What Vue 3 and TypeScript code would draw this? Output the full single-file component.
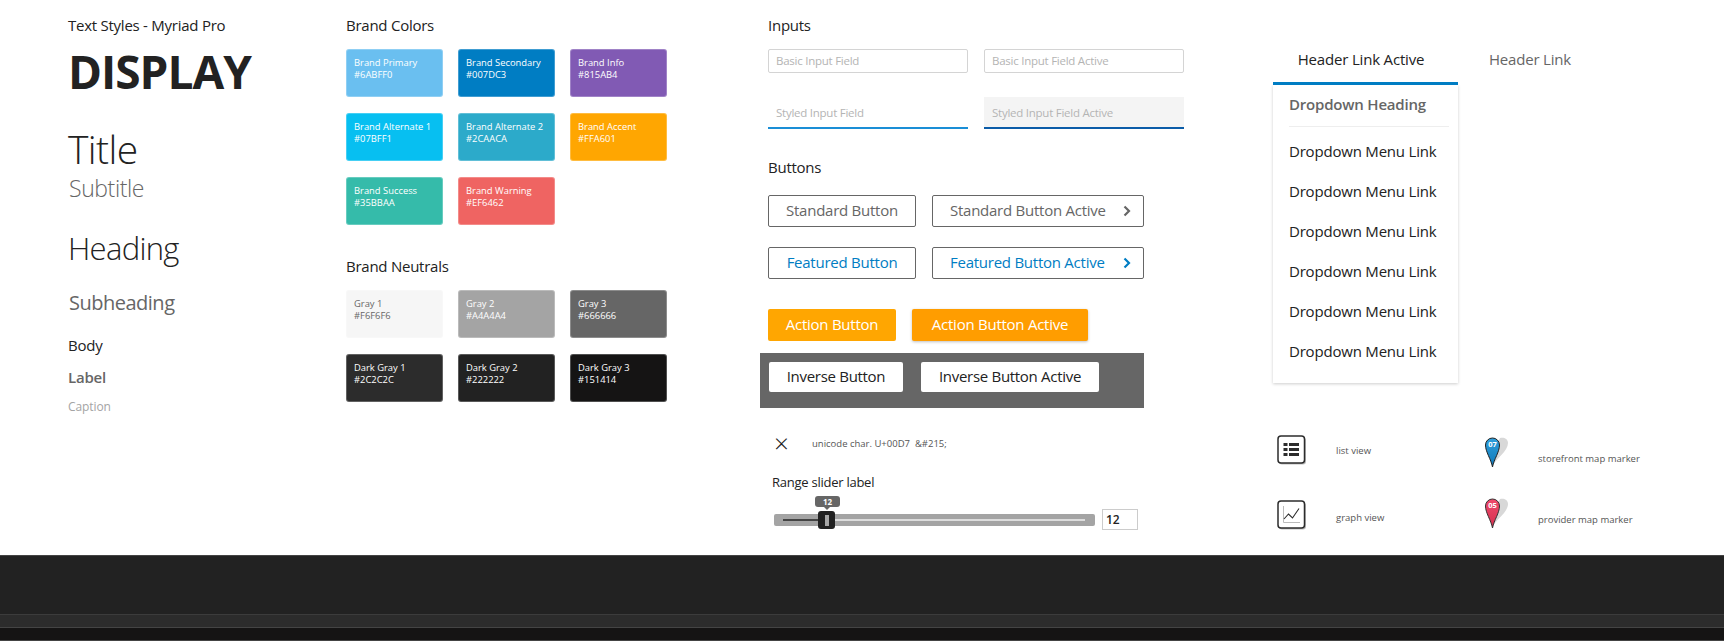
<script setup lang="ts">
const brand = [
  { name: 'Brand Primary', hex: '#6ABFF0' },
  { name: 'Brand Secondary', hex: '#007DC3' },
  { name: 'Brand Info', hex: '#815AB4' },
  { name: 'Brand Alternate 1', hex: '#07BFF1' },
  { name: 'Brand Alternate 2', hex: '#2CAACA' },
  { name: 'Brand Accent', hex: '#FFA601' },
  { name: 'Brand Success', hex: '#35BBAA' },
  { name: 'Brand Warning', hex: '#EF6462' },
]
const neutrals = [
  { name: 'Gray 1', hex: '#F6F6F6', fg: '#666666' },
  { name: 'Gray 2', hex: '#A4A4A4' },
  { name: 'Gray 3', hex: '#666666' },
  { name: 'Dark Gray 1', hex: '#2C2C2C' },
  { name: 'Dark Gray 2', hex: '#222222' },
  { name: 'Dark Gray 3', hex: '#151414' },
]
const links = Array.from({ length: 6 }, () => 'Dropdown Menu Link')
</script>

<template>
  <div class="page">
    <main class="main">
      <section class="col col-text">
        <h2 class="head">Text Styles - Myriad Pro</h2>
        <div class="t-display">DISPLAY</div>
        <div class="t-title">Title</div>
        <div class="t-subtitle">Subtitle</div>
        <div class="t-heading">Heading</div>
        <div class="t-subheading">Subheading</div>
        <div class="t-body">Body</div>
        <div class="t-label">Label</div>
        <div class="t-caption">Caption</div>
      </section>

      <section class="col col-colors">
        <h2 class="head">Brand Colors</h2>
        <div class="swatches first">
          <div v-for="s in brand" :key="s.hex" class="swatch" :style="{ background: s.hex }">
            <span>{{ s.name }}</span><span>{{ s.hex }}</span>
          </div>
        </div>
        <h2 class="head neutrals-head">Brand Neutrals</h2>
        <div class="swatches">
          <div v-for="s in neutrals" :key="s.hex" class="swatch" :style="{ background: s.hex, color: s.fg }">
            <span>{{ s.name }}</span><span>{{ s.hex }}</span>
          </div>
        </div>
      </section>

      <section class="col col-forms">
        <h2 class="head">Inputs</h2>
        <div class="inputs">
          <div class="field basic">Basic Input Field</div>
          <div class="field basic">Basic Input Field Active</div>
          <div class="field styled">Styled Input Field</div>
          <div class="field styled active">Styled Input Field Active</div>
        </div>
        <h2 class="head buttons-head">Buttons</h2>
        <div class="btn-row r-std">
          <button class="btn std w-std">Standard Button</button>
          <button class="btn std w-std-a">
            <span class="label-a">Standard Button Active</span>
            <svg class="chev" width="8" height="12" viewBox="0 0 8 12"><path d="M1.500 1.500 6 6l-4.500 4.500" fill="none" stroke="currentColor" stroke-width="2.200"/></svg>
          </button>
        </div>
        <div class="btn-row r-feat">
          <button class="btn feat w-std">Featured Button</button>
          <button class="btn feat w-std-a">
            <span class="label-a">Featured Button Active</span>
            <svg class="chev" width="8" height="12" viewBox="0 0 8 12"><path d="M1.500 1.500 6 6l-4.500 4.500" fill="none" stroke="currentColor" stroke-width="2.200"/></svg>
          </button>
        </div>
        <div class="btn-row r-action">
          <button class="btn action w-action">Action Button</button>
          <button class="btn action hot w-action-a">Action Button Active</button>
        </div>
        <div class="inverse-panel">
          <button class="btn inverse w-inv">Inverse Button</button>
          <button class="btn inverse w-inv-a">Inverse Button Active</button>
        </div>
        <div class="times-row">
          <span class="times">×</span>
          <span class="times-note">unicode char. U+00D7 &nbsp;&amp;#215;</span>
        </div>
        <div class="range-label">Range slider label</div>
        <div class="range-row">
          <div class="track">
            <div class="rail"><div class="rail-done"></div></div>
            <div class="bubble">12</div>
            <div class="thumb"><i></i></div>
          </div>
          <div class="range-value">12</div>
        </div>
      </section>

      <section class="col col-nav">
        <nav class="tabs">
          <a class="tab active">Header Link Active</a>
          <a class="tab">Header Link</a>
        </nav>
        <div class="dropdown">
          <div class="dd-head">Dropdown Heading</div>
          <a v-for="(l, i) in links" :key="i" class="dd-link">{{ l }}</a>
        </div>
        <div class="legend">
          <div class="legend-col left">
            <div class="legend-item">
              <svg class="ico" width="30" height="30" viewBox="0 0 30 30">
                <rect x="2" y="2.500" width="27" height="27" rx="3" fill="#bbb"/>
                <rect x="1" y="1" width="26.500" height="27" rx="3" fill="#fff" stroke="#2c2c2c" stroke-width="1.500"/>
                <path d="M6.500 8h4v3h-4zM12 8h10v3H12zM6.500 13h4v3h-4zM12 13h10v3H12zM6.500 18h4v3h-4zM12 18h10v3H12z" fill="#2c2c2c"/>
              </svg>
              <span class="legend-text">list view</span>
            </div>
            <div class="legend-item second">
              <svg class="ico" width="30" height="30" viewBox="0 0 30 30">
                <rect x="2" y="2.500" width="27" height="27" rx="3" fill="#bbb"/>
                <rect x="1" y="1" width="26.500" height="27" rx="3" fill="#fff" stroke="#2c2c2c" stroke-width="1.500"/>
                <path d="M6.500 6v16.500H23" fill="none" stroke="#bbb" stroke-width="1"/>
                <path d="M7 19l4.500-5 4 4L22 8.500" fill="none" stroke="#2c2c2c" stroke-width="1.100"/>
              </svg>
              <span class="legend-text lower">graph view</span>
            </div>
          </div>
          <div class="legend-col right">
            <div class="legend-item marker-item">
              <svg class="ico" width="26" height="32" viewBox="0 0 26 32">
                <defs>
                  <linearGradient id="blue" x1="0" x2="0" y1="0" y2="1"><stop offset="0" stop-color="#2f9fdc"/><stop offset="1" stop-color="#0f78b8"/></linearGradient>
                </defs>
                <path d="M9 28 C12 22 24 14 24 6 C24 1 19 0 16 1 L9 14Z" fill="#d8d8d8"/>
                <path d="M8.500 30 C7 22 1.500 15 1.500 8 A7 7 0 0 1 15.500 8 C15.500 15 10 22 8.500 30Z" fill="url(#blue)" stroke="#222" stroke-width="1"/>
                <text x="8.500" y="10" class="pin-num">07</text>
              </svg>
              <span class="legend-text marker-text">storefront map marker</span>
            </div>
            <div class="legend-item marker-item second-m">
              <svg class="ico" width="26" height="32" viewBox="0 0 26 32">
                <defs>
                  <linearGradient id="red" x1="0" x2="0" y1="0" y2="1"><stop offset="0" stop-color="#ef4a6b"/><stop offset="1" stop-color="#d42f4e"/></linearGradient>
                </defs>
                <path d="M9 28 C12 22 24 14 24 6 C24 1 19 0 16 1 L9 14Z" fill="#d8d8d8"/>
                <path d="M8.500 30 C7 22 1.500 15 1.500 8 A7 7 0 0 1 15.500 8 C15.500 15 10 22 8.500 30Z" fill="url(#red)" stroke="#333" stroke-width="1"/>
                <text x="8.500" y="10" class="pin-num">05</text>
              </svg>
              <span class="legend-text marker-text">provider map marker</span>
            </div>
          </div>
        </div>
      </section>
    </main>

    <footer class="footer">
      <div class="f-a"></div>
      <div class="f-b"></div>
      <div class="f-c"></div>
    </footer>
  </div>
</template>

<style>
html, body { background: #fff; }
</style>

<style scoped>
.page {
  width: 1724px;
  height: 641px;
  overflow: hidden;
  font-family: "Open Sans", "Liberation Sans", sans-serif;
  color: #222;
}
.main {
  height: 555px;
  display: flex;
  padding-left: 68px;
  box-sizing: border-box;
}
.col { padding-top: 15px; box-sizing: border-box; }
.col-text { width: 278px; }
.col-colors { width: 422px; }
.col-forms { width: 505px; }
.col-nav { width: 451px; padding-top: 0; }

.head {
  margin: 0;
  font-size: 15px;
  line-height: 20px;
  font-weight: 400;
  letter-spacing: -0.25px;
  color: #222;
}

/* type specimens */
.t-display { margin-top: 4px; height: 64px; line-height: 64px; font-size: 46px; font-weight: 700; letter-spacing: -1px; }
.t-title { margin-top: 26px; height: 40px; line-height: 40px; font-size: 39px; font-weight: 300; letter-spacing: -0.6px; }
.t-subtitle { margin: 4px 0 0 1px; height: 30px; line-height: 30px; font-size: 23px; font-weight: 300; color: #666; letter-spacing: -0.4px; }
.t-heading { margin-top: 25px; height: 40px; line-height: 40px; font-size: 31px; font-weight: 300; letter-spacing: -0.7px; }
.t-subheading { margin: 20px 0 0 1px; height: 30px; line-height: 30px; font-size: 20px; color: #666; letter-spacing: -0.5px; }
.t-body { margin-top: 15px; height: 24px; line-height: 24px; font-size: 15px; letter-spacing: -0.2px; }
.t-label { margin-top: 8px; height: 24px; line-height: 24px; font-size: 15px; font-weight: 600; color: #666; letter-spacing: -0.2px; }
.t-caption { margin-top: 8px; height: 20px; line-height: 20px; font-size: 12px; color: #a4a4a4; letter-spacing: -0.1px; }

/* swatches */
.swatches {
  margin-top: 14px;
  display: grid;
  grid-template-columns: repeat(3, 97px);
  grid-auto-rows: 48px;
  column-gap: 15px;
  row-gap: 16px;
}
.swatch {
  display: flex;
  flex-direction: column;
  padding: 7px 7px;
  box-sizing: border-box;
  border: 1px solid rgba(255, 255, 255, 0.25);
  border-radius: 3px;
  color: #fff;
  font-size: 9.400px;
  font-weight: 500;
  line-height: 12px;
  white-space: nowrap;
}
.neutrals-head { margin-top: 31px; }

/* inputs */
.inputs {
  margin-top: 14px;
  display: grid;
  grid-template-columns: 200px 200px;
  column-gap: 16px;
  row-gap: 24px;
}
.field {
  box-sizing: border-box;
  font-size: 11.500px;
  letter-spacing: -0.25px;
  color: #b4b4b4;
  padding-left: 7px;
}
.basic {
  height: 24px;
  line-height: 22px;
  border: 1px solid #d4d4d4;
  border-radius: 2px;
}
.styled {
  height: 32px;
  line-height: 32px;
  padding-left: 8px;
  border-bottom: 2px solid #1a8ed6;
}
.styled.active {
  background: #f4f4f4;
  border-bottom-color: #0b5ca8;
}
.buttons-head { margin-top: 28px; }

/* buttons */
.btn-row { display: flex; }
.r-std { margin-top: 18px; gap: 16px; }
.r-feat { margin-top: 20px; gap: 16px; }
.r-action { margin-top: 30px; gap: 16px; }
.btn {
  box-sizing: border-box;
  height: 32px;
  padding: 0 0 2px;
  font-family: inherit;
  font-size: 15px;
  letter-spacing: -0.25px;
  background: #fff;
  border-radius: 2px;
  display: flex;
  align-items: center;
  justify-content: center;
}
.std { border: 1px solid #666; color: #666; }
.feat { border: 1px solid #666; color: #007dc3; }
.w-std { width: 148px; }
.w-std-a { width: 212px; justify-content: flex-start; padding-left: 17px; }
.label-a { flex: 0 0 auto; width: 165px; text-align: left; }
.chev { margin: 2px 0 0 8px; }
.action { border: 0; background: #ffa601; color: #fff; border-radius: 2px; }
.hot { background: #ff9d00; box-shadow: 0 1px 3px rgba(0, 0, 0, 0.25); }
.w-action { width: 128px; }
.w-action-a { width: 176px; }
.inverse-panel {
  margin: 12px 0 0 -8px;
  width: 384px;
  height: 55px;
  background: #666;
  box-sizing: border-box;
  padding: 9px 0 0 9px;
  display: flex;
  gap: 18px;
}
.inverse { height: 30px; border: 0; color: #222; letter-spacing: -0.3px; }
.w-inv { width: 134px; }
.w-inv-a { width: 178px; }

/* misc */
.times-row { margin-top: 23px; height: 24px; display: flex; align-items: center; }
.times { width: 44px; font-size: 26px; line-height: 24px; font-weight: 300; color: #222; padding-left: 6px; box-sizing: border-box; }
.times-note { font-size: 9.500px; color: #555; letter-spacing: 0; }
.range-label { margin: 17px 0 0 4px; height: 20px; line-height: 20px; font-size: 13px; letter-spacing: -0.25px; color: #222; }
.range-row {
  margin: 4px 0 0 6px;
  height: 35px;
  display: flex;
  align-items: flex-start;
}
.track {
  position: relative;
  margin-top: 18px;
  width: 321px;
  height: 12px;
  background: #a4a4a4;
  border-radius: 2px;
}
.rail {
  position: absolute;
  left: 9px;
  right: 10px;
  top: 5px;
  height: 2px;
  background: #ddd;
}
.rail-done { width: 44px; height: 2px; background: #444; }
.thumb {
  position: absolute;
  left: 44px;
  top: -3px;
  width: 17px;
  height: 18px;
  background: #222;
  border-radius: 3px;
  display: flex;
  align-items: center;
  justify-content: center;
}
.thumb i { display: block; width: 4px; height: 11px; background: #a8a8a8; }
.bubble {
  position: absolute;
  left: 41px;
  top: -18px;
  width: 25px;
  height: 11px;
  background: #666;
  border-radius: 3px;
  color: #fff;
  font-size: 8px;
  font-weight: 700;
  line-height: 11px;
  text-align: center;
}
.bubble::after {
  content: "";
  position: absolute;
  left: 9px;
  top: 11px;
  border: 3px solid transparent;
  border-bottom: 0;
  border-top-color: #666;
}
.range-value {
  margin: 13px 0 0 7px;
  width: 36px;
  height: 21px;
  box-sizing: border-box;
  border: 1px solid #ccc;
  font-size: 12px;
  font-weight: 600;
  line-height: 19px;
  padding-left: 3px;
}

/* nav */
.tabs { display: flex; height: 85px; padding-top: 36px; box-sizing: border-box; }
.tab {
  box-sizing: border-box;
  height: 49px;
  line-height: 46px;
  text-align: center;
  width: 144px;
  font-size: 15px;
  letter-spacing: -0.18px;
  color: #666;
}
.tab.active {
  width: 185px;
  padding-right: 9px;
  color: #222;
  border-bottom: 3px solid #007dc3;
}
.dropdown {
  width: 185px;
  height: 298px;
  box-sizing: border-box;
  padding-left: 16px;
  box-shadow: 0 1px 3px rgba(0, 0, 0, 0.2);
}
.dd-head {
  height: 42px;
  line-height: 38px;
  margin-right: 9px;
  margin-bottom: 4px;
  border-bottom: 1px solid #eee;
  box-sizing: border-box;
  font-size: 15px;
  font-weight: 600;
  letter-spacing: -0.2px;
  color: #666;
}
.dd-link {
  display: block;
  height: 40px;
  line-height: 40px;
  font-size: 15px;
  letter-spacing: -0.2px;
  color: #222;
}

/* legend */
.legend { display: flex; margin: 52px 0 0 4px; }
.legend-col { display: flex; flex-direction: column; }
.legend-col.left { width: 207px; }
.legend-item { display: flex; height: 30px; }
.legend-item .ico { flex: none; display: block; }
.legend-item.second { margin-top: 35px; }
.left .ico { margin-right: 29px; }
.legend-text {
  font-size: 9.500px;
  font-weight: 500;
  line-height: 32px;
  color: #555;
}
.legend-text.lower { margin-top: 2px; }
.marker-item { height: 32px; margin-top: 2px; }
.marker-item .ico { margin-right: 28px; }
.marker-text { margin-top: 6px; }
.second-m { margin-top: 29px; }
.pin-num {
  font-family: "Open Sans", sans-serif;
  font-size: 7.500px;
  font-weight: 700;
  fill: #fff;
  text-anchor: middle;
}

/* footer */
.footer { height: 86px; display: flex; flex-direction: column; }
.f-a { height: 59px; box-sizing: border-box; background: #222; border-top: 1px solid #444; }
.f-b { height: 13px; box-sizing: border-box; background: #2c2c2c; border-top: 1px solid #3c3c3c; }
.f-c { height: 14px; box-sizing: border-box; background: #151414; border-top: 1px solid #444; border-bottom: 1px solid #444; }
</style>
